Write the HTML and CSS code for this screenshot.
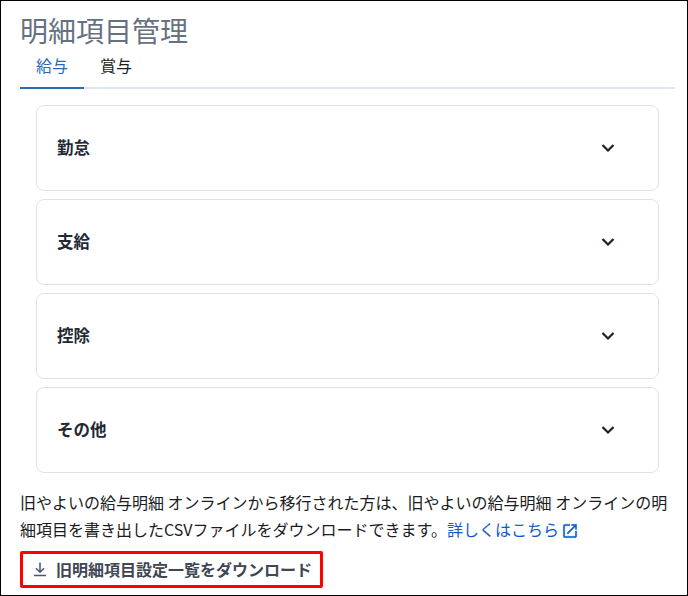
FILE: index.html
```html
<!DOCTYPE html>
<html lang="ja">
<head>
<meta charset="utf-8">
<title>明細項目管理</title>
<link rel="stylesheet" href="styles.css">
</head>
<body>
<main class="page">
  <h1 class="title">明細項目管理</h1>
  <nav class="tabs">
    <a class="tab tab-active">給与</a>
    <a class="tab">賞与</a>
  </nav>
  <div class="panels">
    <section class="panel"><h2 class="panel-title">勤怠</h2><svg class="chevron" viewBox="0 0 24 24"><path d="m6.500 9 5.500 5.500L17.500 9"/></svg></section>
    <section class="panel"><h2 class="panel-title">支給</h2><svg class="chevron" viewBox="0 0 24 24"><path d="m6.500 9 5.500 5.500L17.500 9"/></svg></section>
    <section class="panel"><h2 class="panel-title">控除</h2><svg class="chevron" viewBox="0 0 24 24"><path d="m6.500 9 5.500 5.500L17.500 9"/></svg></section>
    <section class="panel"><h2 class="panel-title">その他</h2><svg class="chevron" viewBox="0 0 24 24"><path d="m6.500 9 5.500 5.500L17.500 9"/></svg></section>
  </div>
  <p class="note">旧やよいの給与明細 オンラインから移行された方は、旧やよいの給与明細 オンラインの明<br>細項目を書き出したCSVファイルをダウンロードできます。<a class="link">詳しくはこちら<svg class="external" viewBox="0 0 24 24"><path d="M19 19H5V5h7V3H5a2 2 0 0 0-2 2v14a2 2 0 0 0 2 2h14c1.1 0 2-.9 2-2v-7h-2zM14 3v2h3.59l-9.83 9.83 1.41 1.41L19 6.41V10h2V3z"/></svg></a></p>
  <button class="download"><svg class="download-icon" viewBox="0 0 14 16"><path d="M7 .5v9.500M3 6.300l4 4 4-4M1 13.500h12"/></svg><span class="download-label">旧明細項目設定一覧をダウンロード</span></button>
</main>
</body>
</html>
```

FILE: styles.css
```css
* { box-sizing: border-box; }

body {
  margin: 0;
  background: #fff;
  color: #1a1c21;
  font-family: "Noto Sans CJK JP", sans-serif;
  font-size: 16px;
}

.page {
  width: 688px;
  height: 596px;
  padding: 9px 12px 0 19px;
  border: 1px solid #000;
  overflow: hidden;
}

.title {
  margin: 0;
  color: #66727f;
  font-size: 28px;
  font-weight: 400;
  line-height: 40px;
}

.tabs {
  display: flex;
  height: 39px;
  border-bottom: 2px solid #e2e8f0;
}

.tab {
  height: 39px;
  padding: 0 16px;
  line-height: 30px;
}

.tab-active {
  color: #2b6cb0;
  border-bottom: 2px solid #2b6cb0;
}

.panels {
  display: flex;
  flex-direction: column;
  gap: 8px;
  padding: 16px 16px 0;
}

.panel {
  display: flex;
  align-items: center;
  justify-content: space-between;
  height: 86px;
  padding: 0 38px 0 20px;
  border: 1px solid #e2e2e4;
  border-radius: 8px;
}

.panel-title {
  margin: 0;
  padding-bottom: 2px;
  color: #232833;
  font-size: 16.5px;
  font-weight: 700;
}

.chevron {
  width: 24px;
  height: 24px;
  fill: none;
  stroke: #1a202c;
  stroke-width: 2.2;
}

.note {
  margin: 16px 0 0;
  line-height: 27px;
  white-space: nowrap;
}

.link { color: #0b5bd0; }

.external {
  width: 18px;
  height: 18px;
  margin-left: 2px;
  vertical-align: -4px;
  fill: currentColor;
  stroke: currentColor;
  stroke-width: 0.3;
}

.download {
  display: flex;
  align-items: center;
  width: 303px;
  height: 37px;
  margin: 8px 0 0;
  padding: 0 8px 0 10px;
  border: 3px solid #f00;
  border-radius: 2px;
  background: #fff;
  color: #3f4753;
  font: inherit;
  font-weight: 700;
  white-space: nowrap;
}

.download-label { padding-bottom: 2px; }

.download-icon {
  flex: none;
  width: 14px;
  height: 16px;
  margin-right: 9px;
  fill: none;
  stroke: #4a5568;
  stroke-width: 1.5;
}
```
